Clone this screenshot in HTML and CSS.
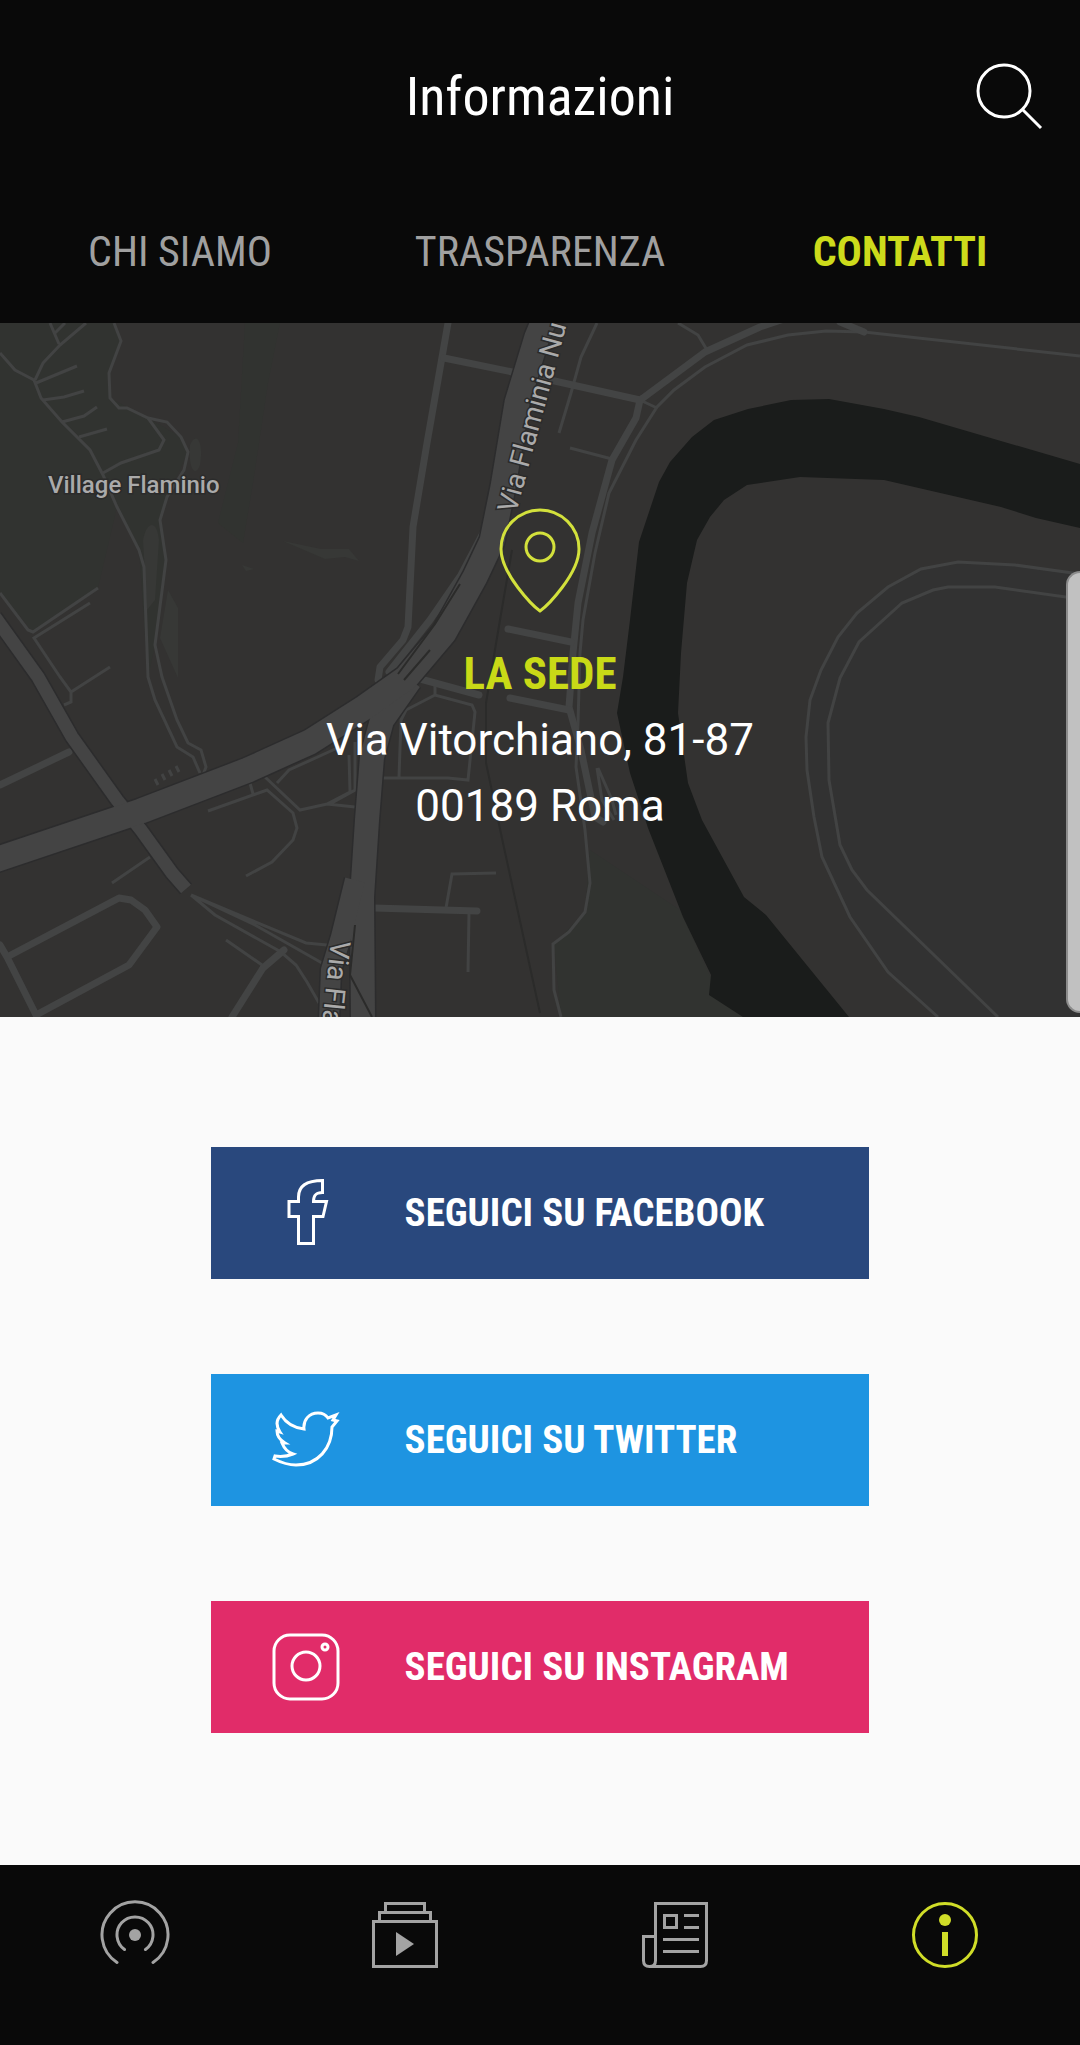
FILE: index.html
```html
<!DOCTYPE html>
<html lang="it">
<head>
    <meta charset="UTF-8">
    <meta name="viewport" content="width=device-width, initial-scale=1.0">
    <title>Informazioni</title>
    <link rel="stylesheet" href="styles.css">
</head>
<body>
    <header class="header">
        <div class="title-bar">
            <h1>Informazioni</h1>
            <button class="search-btn" aria-label="Cerca">
                <svg viewBox="0 0 68 68"><circle cx="28" cy="28" r="26"/><path d="M46 46l19 19"/></svg>
            </button>
        </div>
        <nav class="tabs">
            <a href="#chi-siamo">CHI SIAMO</a>
            <a href="#trasparenza">TRASPARENZA</a>
            <a href="#contatti" class="active">CONTATTI</a>
        </nav>
    </header>

    <main>
        <section class="map" id="contatti">
            <!-- Mappa di sfondo -->
            <svg class="map-bg" viewBox="0 323 1080 694" preserveAspectRatio="xMidYMid slice" aria-hidden="true">
                <path class="park" d="M0 323H114L121 341 109 373 110 398 148 418 181 437 188 452 167 497 160 520 166 560 155 645 148 677 139 550 117 507 98 588 33 632 0 593z"/>
                <path class="park" d="M245 323h35l-12 60-15 100-10 60-25-20 20-80zM590 850l90 60 32 70 31 37H561l-7-73 31-32z"/>
                <path class="grove" d="M143 540c4-20 14-20 16 0l-4 60-8 10zM168 590l10 18v70l-18-40zM190 445c6-14 14-4 10 20-4 12-12 6-10-20zM283 541l38 8h28l10 12-14-4-20 2zM242 565l12 4-8 2z"/>
                <path class="field" d="M1080 573L1015 565 958 562 921 569 888 587 857 613 838 637 821 670 810 700 806 737 807 770 814 817 822 857 850 917 888 972 938 1017H1080z"/>
                <path class="river" d="M1080 464L919 417 884 409 829 399 791 400 748 409 714 420 692 437 670 462 659 482 639 542 630 620 623 677 617 713 630 773 648 828 683 917 711 975 709 995 743 1017H849L766 915 744 897 702 820 688 783 678 713 681 653 687 583 697 540 710 517 724 500 747 485 800 477 884 480 1001 507 1036 518 1080 528z"/>
                <path class="rail" d="M512 550L500 620 486 703 486 763 503 843 540 1013"/>
                <g class="lane">
                    <path d="M1080 574L1015 565 958 562 921 569 888 587 857 613 838 637 821 670 810 700 806 737 807 770 814 817 822 857 850 917 888 972 938 1017"/>
                    <path d="M1080 599L995 587 948 587 933 590 902 603 859 642 840 678 828 723 829 780 840 845 852 870 867 890 998 1017"/>
                    <path d="M1080 356L864 332 826 331 788 335 747 345 705 367 674 390 657 407 636 440 609 493 595 553 583 620 580 653 578 723 576 767 585 830 590 883 585 912 569 932 553 944 554 990 561 1017"/>
                    <path d="M678 323L698 335 707 350M640 400l17 8M597 323L581 357 571 393 559 433M570 448L612 459"/>
                    <path d="M0 353L15 370 34 380 41 398 62 422 90 450 103 475 117 507 139 550 144 567 148 677 155 700 177 747 193 757 200 773"/>
                    <path d="M86 323L60 345 43 363 35 380M50 323L59 344M65 323L55 333M36 383L77 366M43 400L64 397 84 391M62 422L84 416 97 407M79 437L107 429"/>
                    <path d="M114 323L121 341 109 373 110 398 119 408 127 408 148 418 167 422 181 437 188 452 184 470 167 497 160 520 166 560 155 645 162 677 177 720 188 743 201 750 206 767 203 775"/>
                    <path d="M148 418L164 440 159 450 121 463 103 473M0 593L28 630 33 632 98 588M90 603L34 638 60 677 71 692 71 702 64 705M71 692L110 667M150 857L112 883"/>
                    <path d="M191 895L306 943 327 945M191 895L255 925 322 963M191 895L215 915 281 952 296 965 307 982 319 1003M226 940L262 965"/>
                    <path d="M208 811L267 790 293 813 297 828 293 840 272 862 246 876M250 783L253 794M265 777L300 810 327 804 355 807M277 783L289 770 344 745M327 804L350 792 349 755M330 804L355 790V742"/>
                    <path d="M382 778H448L468 780 475 712 472 705 435 695 406 710 401 720 399 777M435 695V685M446 908L452 874 496 873M469 912L468 972"/>
                    <path d="M597 768L602 800 614 820M598 768L612 800 616 815"/>
                </g>
                <g class="street">
                    <path d="M448 323L441 363 427 443 413 527 408 627 403 640 380 667 378 680 390 690"/>
                    <path d="M389 672L430 620 461 575 490 520"/>
                    <path d="M444 358L527 375 550 380 640 400 643 398 705 352 760 327 781 320M640 400L636 418 612 460 592 533 578 603 573 653 569 707 581 750 595 817 603 822"/>
                    <path d="M840 322L864 332M508 629L571 642M413 677L479 695M510 698L569 710M0 785L69 752M374 908L477 911"/>
                    <path d="M0 945L7 957 119 898 131 900 145 910 157 927 129 965 36 1015 7 957M284 950L263 968 232 1017"/>
                </g>
                <g class="road-edge">
                    <path d="M-5 617L38 677 72 737 117 800 141 830 172 873 186 889" stroke-width="16"/>
                    <path d="M410 680L382 720 372 757 367 820 362 897 363 1020" stroke-width="27"/>
                    <path d="M355 880L341 937 331 970 329 1020" stroke-width="23"/>
                    <path d="M-5 860L141 811 248 770 310 742 365 707 406 678 444 633 475 577 492 541 503 487 517 403 537 337 545 318" stroke-width="28"/>
                </g>
                <g class="road">
                    <path d="M-5 617L38 677 72 737 117 800 141 830 172 873 186 889" stroke-width="13"/>
                    <path d="M410 680L382 720 372 757 367 820 362 897 363 1020" stroke-width="24"/>
                    <path d="M355 880L341 937 331 970 329 1020" stroke-width="20"/>
                    <path d="M-5 860L141 811 248 770 310 742 365 707 406 678 444 633 475 577 492 541 503 487 517 403 537 337 545 318" stroke-width="25"/>
                </g>
                <path class="rail" d="M398 674L435 624 460 584M404 680L430 650M355 925L350 975 372 1017"/>
                <path class="lane" d="M158 785l-3-6M165 780l-3-6M172 776l-3-6M179 772l-3-6"/>
                <text class="place" x="48" y="493">Village Flaminio</text>
                <text class="place street-name" transform="translate(516 514) rotate(-75)">Via Flaminia Nuo</text>
                <text class="place street-name" transform="translate(331 940) rotate(96)">Via Fla</text>
            </svg>
            <div class="address">
                <svg class="pin" viewBox="0 0 84 106"><path d="M42 104C35 99 3 67 3 42a39 39 0 0 1 78 0C81 67 49 99 42 104z"/><circle cx="42" cy="40" r="14"/></svg>
                <h2>LA SEDE</h2>
                <p>Via Vitorchiano, 81-87<br>00189 Roma</p>
            </div>
            <div class="edge-handle"></div>
        </section>

        <section class="social">
            <a href="#facebook" class="social-btn facebook">
                <svg viewBox="12 14 68 68"><path d="M29 36.500h9.500V32C38.500 21 46 15.500 62.500 15.500V27.500C55 27.500 53.500 31 53.500 36.500H66.500L63 51.500H53.500V78.500H38.500V51.500H29z"/></svg>
                <span>SEGUICI SU FACEBOOK</span>
            </a>
            <a href="#twitter" class="social-btn twitter">
                <svg viewBox="12 11 68 68"><path d="M21 20C26 28 35 33 44 34 43 25 49 18 58 18 62 18 66 20 68 23L76 20 73 25 77 26 72 32C72 53 58 70 36 70 27 70 20 67 14 64L15 61C22 62 28 61 33 59 27 57 24 53 22 48L25 48C20 45 17 41 17 36L20 37C16 31 16 25 21 20z"/></svg>
                <span>SEGUICI SU TWITTER</span>
            </a>
            <a href="#instagram" class="social-btn instagram">
                <svg viewBox="0 0 68 68"><rect x="2" y="2" width="64" height="64" rx="16"/><circle cx="34" cy="33" r="14"/><circle cx="53" cy="14" r="3"/></svg>
                <span>SEGUICI SU INSTAGRAM</span>
            </a>
        </section>
    </main>

    <!-- Barra di navigazione -->
    <nav class="bottom-nav">
        <a href="#dirette" aria-label="Dirette">
            <svg viewBox="0 0 72 72"><path stroke-linecap="round" d="M18 63.500A33 33 0 1 1 54 63.500M25.500 50.500A18 18 0 1 1 46.500 50.500"/><circle class="fill" cx="36" cy="36" r="6"/></svg>
        </a>
        <a href="#video" aria-label="Video">
            <svg viewBox="0 0 72 72"><path d="M4.500 22.500h63v45h-63zM10.500 22.500v-9h51v9M16.500 13.500v-9h39v9"/><path class="fill" d="M27 33l18 12-18 12z"/></svg>
        </a>
        <a href="#notizie" aria-label="Notizie">
            <svg viewBox="0 0 72 72"><path d="M16.500 61.500v-57h51v57q0 6-6 6h-51q-6 0-6-6v-24h12M10.500 67.500q6 0 6-6M25.500 16.500h12v12h-12zM45 16.500h15M45 28.500h15M24 40.500h36M24 52.500h36"/></svg>
        </a>
        <a href="#info" class="active" aria-label="Informazioni">
            <svg viewBox="0 0 72 72"><circle cx="36" cy="36" r="31.500"/><circle class="fill" cx="36" cy="21" r="6"/><path class="fill" d="M33 33h6v24h-6z"/></svg>
        </a>
    </nav>
</body>
</html>
```
FILE: styles.css
```css
* {
    box-sizing: border-box;
}

body {
    display: flex;
    flex-direction: column;
    min-height: 100vh;
    margin: 0;
    background-color: #fafafa;
    font-family: 'Roboto Condensed', 'Roboto', sans-serif;
}

a {
    text-decoration: none;
}

svg {
    display: block;
    fill: none;
    stroke: currentColor;
    stroke-width: 3;
}

.fill {
    fill: currentColor;
    stroke: none;
}

/* Intestazione */
.header {
    background-color: #090909;
    color: white;
}

.title-bar {
    display: grid;
    grid-template-columns: 1fr auto 1fr;
    align-items: center;
    padding: 62px 36px;
}

h1 {
    grid-column: 2;
    margin: 0;
    font-size: 54px;
    font-weight: 400;
    line-height: 70px;
}

.search-btn {
    justify-self: end;
    width: 68px;
    padding: 0;
    border: none;
    background: none;
    color: white;
    cursor: pointer;
}

.tabs {
    display: grid;
    grid-template-columns: repeat(3, 1fr);
    padding: 28px 0 41px;
    font-size: 42px;
    line-height: 60px;
    text-align: center;
}

.tabs a {
    color: #a0a0a0;
}

.tabs .active {
    color: #cddb1b;
    font-weight: 700;
}

/* Mappa e indirizzo */
.map {
    position: relative;
    padding: 184px 20px 178px;
    background-color: #333231;
    overflow: hidden;
}

.map-bg {
    position: absolute;
    inset: 0;
    width: 100%;
    height: 100%;
    stroke: none;
}

.park {
    fill: #313330;
}

.grove {
    fill: #373836;
}

.field {
    fill: #323232;
}

.river {
    fill: #1a1c1b;
}

.rail {
    fill: none;
    stroke: #2b2b2a;
    stroke-width: 2;
}

.lane {
    fill: none;
    stroke: #424343;
    stroke-width: 3;
}

.street {
    fill: none;
    stroke: #434444;
    stroke-width: 7;
    stroke-linecap: round;
    stroke-linejoin: round;
}

.road-edge {
    fill: none;
    stroke: #2c2c2d;
    stroke-linejoin: round;
}

.road {
    fill: none;
    stroke: #444444;
    stroke-linejoin: round;
}

.place {
    fill: #aaaaaa;
    stroke: #2b2b2b;
    stroke-width: 3;
    paint-order: stroke;
    font-family: 'Roboto', sans-serif;
    font-size: 24px;
    font-weight: 500;
}

.street-name {
    font-size: 28px;
    font-weight: 400;
}

.address {
    position: relative;
    display: flex;
    flex-direction: column;
    align-items: center;
    color: white;
    text-align: center;
}

.pin {
    width: 84px;
    color: #d3e13c;
}

h2 {
    margin: 28px 0 0;
    color: #c9da17;
    font-size: 45px;
    line-height: 66px;
}

.address p {
    margin: 0;
    font-family: 'Roboto', sans-serif;
    font-size: 44px;
    line-height: 66px;
}

.edge-handle {
    position: absolute;
    top: 248px;
    right: 0;
    bottom: 4px;
    width: 14px;
    border: 2px solid #8c8c8c;
    border-right: none;
    border-radius: 14px 0 0 14px;
    background-color: #c1c1c1;
}

/* Pulsanti social */
.social {
    display: flex;
    flex-direction: column;
    align-items: center;
    gap: 95px;
    padding: 130px 0;
}

.social-btn {
    display: flex;
    align-items: center;
    gap: 65px;
    width: 61%;
    padding: 32px 61px;
    color: white;
    font-size: 39px;
    font-weight: 700;
    line-height: 44px;
    white-space: nowrap;
}

.social-btn svg {
    flex: none;
    width: 68px;
}

.facebook {
    background-color: #29487d;
}

.twitter {
    background-color: #1e94e1;
}

.instagram {
    background-color: #e12c69;
}

/* Barra in basso */
.bottom-nav {
    display: grid;
    grid-template-columns: repeat(4, 1fr);
    justify-items: center;
    margin-top: auto;
    padding: 34px 0 74px;
    background-color: #090909;
}

.bottom-nav a {
    color: #a3a3a3;
}

.bottom-nav .active {
    color: #d0dd28;
}

.bottom-nav svg {
    width: 72px;
}
```
